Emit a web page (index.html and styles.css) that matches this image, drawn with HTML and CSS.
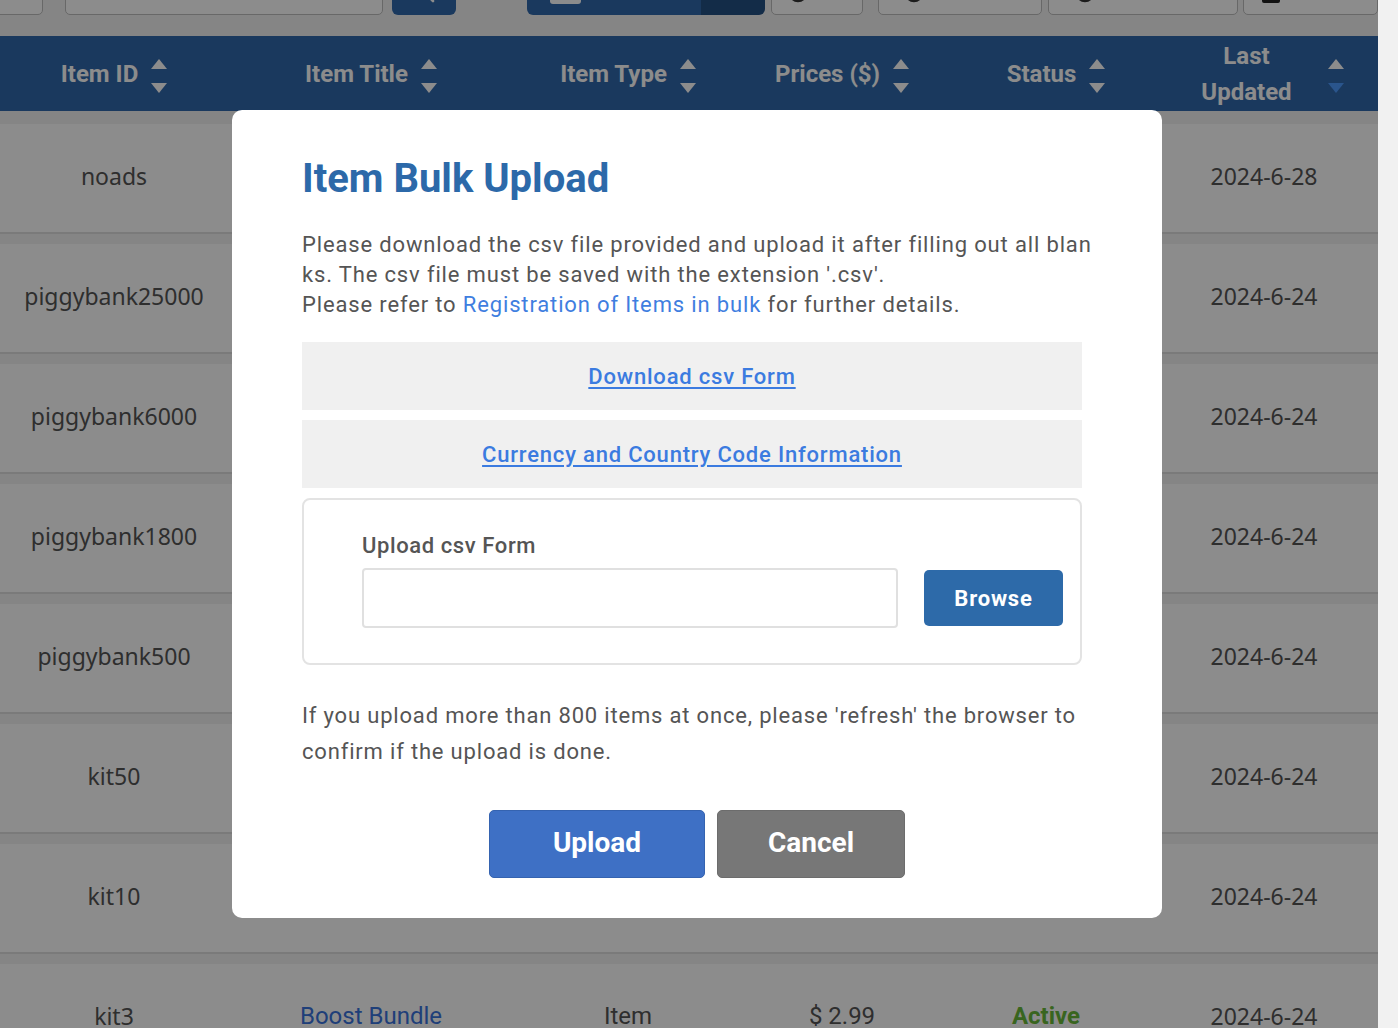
FILE: index.html
```html
<!DOCTYPE html>
<html lang="en">
<head>
<meta charset="utf-8">
<title>Items</title>
<link rel="stylesheet" href="styles.css">
</head>
<body>
<div class="app">
  <div class="main">
    <div class="toolbar">
      <div class="tb-input tb-first"></div>
      <div class="tb-input tb-search"></div>
      <div class="tb-btn tb-go">
        <svg width="22" height="22" viewBox="0 0 22 22"><circle cx="9" cy="9" r="6.5" fill="none" stroke="#fff" stroke-width="2.4"/><path d="M14 14l5 5" stroke="#fff" stroke-width="2.6" stroke-linecap="round"/></svg>
      </div>
      <div class="tb-split">
        <span class="tb-split-main"><span class="tb-chip"></span></span>
        <span class="tb-split-caret"></span>
      </div>
      <div class="tb-out tb-w1"><svg class="tb-ico" width="20" height="20" viewBox="0 0 20 20"><circle cx="10" cy="10" r="8" fill="none" stroke="#333" stroke-width="2.5"/></svg></div>
      <div class="tb-out tb-w2"><svg class="tb-ico" width="20" height="20" viewBox="0 0 20 20"><circle cx="10" cy="10" r="8" fill="none" stroke="#333" stroke-width="2.5"/></svg></div>
      <div class="tb-out tb-w3"><svg class="tb-ico" width="20" height="20" viewBox="0 0 20 20"><circle cx="10" cy="10" r="8" fill="none" stroke="#333" stroke-width="2.5"/></svg></div>
      <div class="tb-out tb-w4"><svg class="tb-ico" width="18" height="20" viewBox="0 0 18 20"><rect x="0" y="0" width="18" height="20" rx="2" fill="#222"/></svg></div>
    </div>

    <div class="grid thead">
      <div class="th"><span class="th-label">Item ID</span><svg class="sort" width="16" height="34" viewBox="0 0 16 34"><path d="M8 0L16 10H0Z" fill="#fff"/><path d="M0 24H16L8 34Z" fill="#fff"/></svg></div>
      <div class="th"><span class="th-label">Item Title</span><svg class="sort" width="16" height="34" viewBox="0 0 16 34"><path d="M8 0L16 10H0Z" fill="#fff"/><path d="M0 24H16L8 34Z" fill="#fff"/></svg></div>
      <div class="th"><span class="th-label">Item Type</span><svg class="sort" width="16" height="34" viewBox="0 0 16 34"><path d="M8 0L16 10H0Z" fill="#fff"/><path d="M0 24H16L8 34Z" fill="#fff"/></svg></div>
      <div class="th"><span class="th-label">Prices ($)</span><svg class="sort" width="16" height="34" viewBox="0 0 16 34"><path d="M8 0L16 10H0Z" fill="#fff"/><path d="M0 24H16L8 34Z" fill="#fff"/></svg></div>
      <div class="th th-status"><span class="th-label">Status</span><svg class="sort" width="16" height="34" viewBox="0 0 16 34"><path d="M8 0L16 10H0Z" fill="#fff"/><path d="M0 24H16L8 34Z" fill="#fff"/></svg></div>
      <div class="th"><span class="th-label th-wrap">Last Updated</span><svg class="sort" width="16" height="34" viewBox="0 0 16 34"><path d="M8 0L16 10H0Z" fill="#fff"/><path d="M0 24H16L8 34Z" fill="#4d9bff"/></svg></div>
    </div>

    <div class="rows">
      <div class="grid row"><div class="td">noads</div><div class="td"></div><div class="td"></div><div class="td"></div><div class="td"></div><div class="td">2024-6-28</div></div>
      <div class="grid row"><div class="td">piggybank25000</div><div class="td"></div><div class="td"></div><div class="td"></div><div class="td"></div><div class="td">2024-6-24</div></div>
      <div class="grid row"><div class="td">piggybank6000</div><div class="td"></div><div class="td"></div><div class="td"></div><div class="td"></div><div class="td">2024-6-24</div></div>
      <div class="grid row"><div class="td">piggybank1800</div><div class="td"></div><div class="td"></div><div class="td"></div><div class="td"></div><div class="td">2024-6-24</div></div>
      <div class="grid row"><div class="td">piggybank500</div><div class="td"></div><div class="td"></div><div class="td"></div><div class="td"></div><div class="td">2024-6-24</div></div>
      <div class="grid row"><div class="td">kit50</div><div class="td"></div><div class="td"></div><div class="td"></div><div class="td"></div><div class="td">2024-6-24</div></div>
      <div class="grid row"><div class="td">kit10</div><div class="td"></div><div class="td"></div><div class="td"></div><div class="td"></div><div class="td">2024-6-24</div></div>
      <div class="grid row"><div class="td">kit3</div><div class="td link">Boost Bundle</div><div class="td cond">Item</div><div class="td cond">$ 2.99</div><div class="td active">Active</div><div class="td">2024-6-24</div></div>
    </div>

    <div class="dim"></div>
  </div>
  <div class="scrollbar"></div>
</div>

<div class="modal-wrap">
  <div class="modal">
    <h2 class="modal-title">Item Bulk Upload</h2>
    <p class="intro">Please download the csv file provided and upload it after filling out all blanks. The csv file must be saved with the extension '.csv'.<br>Please refer to <a class="inline-link" href="#">Registration of Items in bulk</a> for further details.</p>
    <div class="dl-box dl-first"><a class="dl-link" href="#">Download csv Form</a></div>
    <div class="dl-box"><a class="dl-link" href="#">Currency and Country Code Information</a></div>
    <div class="upload-box">
      <div class="upload-label">Upload csv Form</div>
      <div class="upload-row">
        <div class="file-field"></div>
        <button class="browse">Browse</button>
      </div>
    </div>
    <p class="note">If you upload more than 800 items at once, please 'refresh' the browser to confirm if the upload is done.</p>
    <div class="actions">
      <button class="btn btn-upload">Upload</button>
      <button class="btn btn-cancel">Cancel</button>
    </div>
  </div>
</div>
</body>
</html>
```
FILE: styles.css
```css
* { box-sizing: border-box; }
html, body { margin: 0; padding: 0; }
body {
  font-family: "Noto Sans", "Open Sans", sans-serif;
  background: #f3f3f3;
  overflow: hidden;
}
.app { display: flex; height: 100vh; }
.main { position: relative; flex: 1; overflow: hidden; background: #f3f3f3; }
.scrollbar { width: 20px; background: #f1f1f1; }

/* toolbar (scrolled partly out of view) */
.toolbar {
  display: flex;
  align-items: center;
  height: 44px;
  margin-top: -29px;
  margin-bottom: 21px;
}
.tb-input, .tb-out {
  height: 44px;
  background: #fff;
  border: 1.5px solid #bdbdbd;
  border-radius: 5px;
}
.tb-first { width: 53px; margin-left: -10px; }
.tb-search { width: 318px; margin-left: 22px; }
.tb-btn {
  height: 44px; width: 64px; margin-left: 9px;
  background: #3169ab; border-radius: 6px;
  display: flex; align-items: center; justify-content: center;
}
.tb-btn svg { margin-left: 2px; }
.tb-split {
  display: flex; height: 44px; width: 239px; margin-left: 71px;
  border-radius: 6px; overflow: hidden;
}
.tb-split-main { flex: 1; background: #3169ab; display: flex; align-items: center; padding-left: 23px; }
.tb-chip { width: 31px; height: 22px; background: #fff; border-radius: 3px; }
.tb-split-caret { width: 64px; background: #245083; }
.tb-out { display: flex; align-items: center; }
.tb-w1 { width: 92px; margin-left: 6px; padding-left: 16px; }
.tb-w2 { width: 164px; margin-left: 15px; padding-left: 25px; }
.tb-w3 { width: 190px; margin-left: 6px; padding-left: 26px; }
.tb-w4 { width: 135px; margin-left: 5px; padding-left: 18px; }

/* table */
.grid {
  display: grid;
  grid-template-columns: 228px 286px 228px 200px 208px 1fr;
}
.thead { height: 75px; background: #3169ab; }
.th {
  display: flex; align-items: center; justify-content: center; gap: 13px;
  color: #fff;
  font-family: "Roboto", "Noto Sans", sans-serif;
  font-weight: 700; font-size: 24px;
}
.th-status { padding-left: 20px; }
.th-wrap { width: 136px; text-align: center; line-height: 36px; margin-left: -6px; }
.sort { flex: none; margin-top: 4px; }

.rows { padding-top: 3px; }
.row {
  height: 120px;
  border-top: 10px solid #f3f3f3;
  border-bottom: 2px solid #dedede;
  background: #fff;
}
.td {
  display: flex; align-items: center; justify-content: center;
  font-size: 23px; color: #555;
  padding-bottom: 4px;
}
.td.link { font-family: "Roboto", sans-serif; color: #3a73dc; font-size: 24px; }
.td.cond { font-family: "Roboto", sans-serif; font-size: 24px; }
.td.active { font-family: "Roboto", sans-serif; color: #69b83a; font-weight: 700; font-size: 24px; }

.dim { position: absolute; inset: 0; background: rgba(0, 0, 0, 0.45); }

/* modal */
.modal-wrap {
  position: fixed; inset: 0;
  display: flex; align-items: center; justify-content: center;
}
.modal {
  width: 930px; margin-right: 4px;
  background: #fff; border-radius: 10px;
  padding: 46px 70px 40px;
  font-family: "Roboto", "Noto Sans", sans-serif;
  color: #555;
}
.modal-title {
  margin: 0; font-size: 40px; line-height: 46px; font-weight: 700; color: #2c69a9;
}
.intro {
  margin: 28px 0 0;
  font-size: 22px; line-height: 30px;
  word-break: break-all;
  letter-spacing: 0.85px;
}
.inline-link { color: #3f7ee0; text-decoration: none; }
.dl-box {
  width: 780px; height: 68px; margin-top: 10px;
  background: #f0f0f0;
  display: flex; align-items: center; justify-content: center;
}
.dl-first { margin-top: 22px; }
.dl-link { color: #3b7be0; font-size: 22px; font-weight: 500; letter-spacing: 0.8px; text-decoration: underline; text-underline-offset: 3px; }
.upload-box {
  width: 780px; margin-top: 10px;
  border: 2px solid #e3e3e3; border-radius: 8px;
  padding: 32px 17px 35px 58px;
}
.upload-label { font-size: 22px; line-height: 28px; font-weight: 500; letter-spacing: 0.6px; color: #555; }
.upload-row { display: flex; align-items: center; gap: 26px; margin-top: 8px; }
.file-field { flex: 1; height: 60px; border: 2px solid #e0e0e0; border-radius: 4px; }
.browse {
  width: 139px; height: 56px; border: 0; border-radius: 5px;
  background: #2d6aa9; color: #fff;
  font-family: inherit; font-size: 22px; font-weight: 700; letter-spacing: 0.8px;
}
.note { margin: 33px 0 0; font-size: 22px; line-height: 36px; letter-spacing: 0.82px; }
.actions { display: flex; justify-content: center; gap: 12px; margin-top: 40px; }
.btn {
  height: 68px; border-radius: 5px; color: #fff;
  font-family: inherit; font-size: 28px; font-weight: 700;
  padding: 0 0 4px;
}
.btn-upload { width: 216px; background: #3e70c5; border: 1px solid #3563b0; }
.btn-cancel { width: 188px; background: #777; border: 1px solid #6c6c6c; }
```
